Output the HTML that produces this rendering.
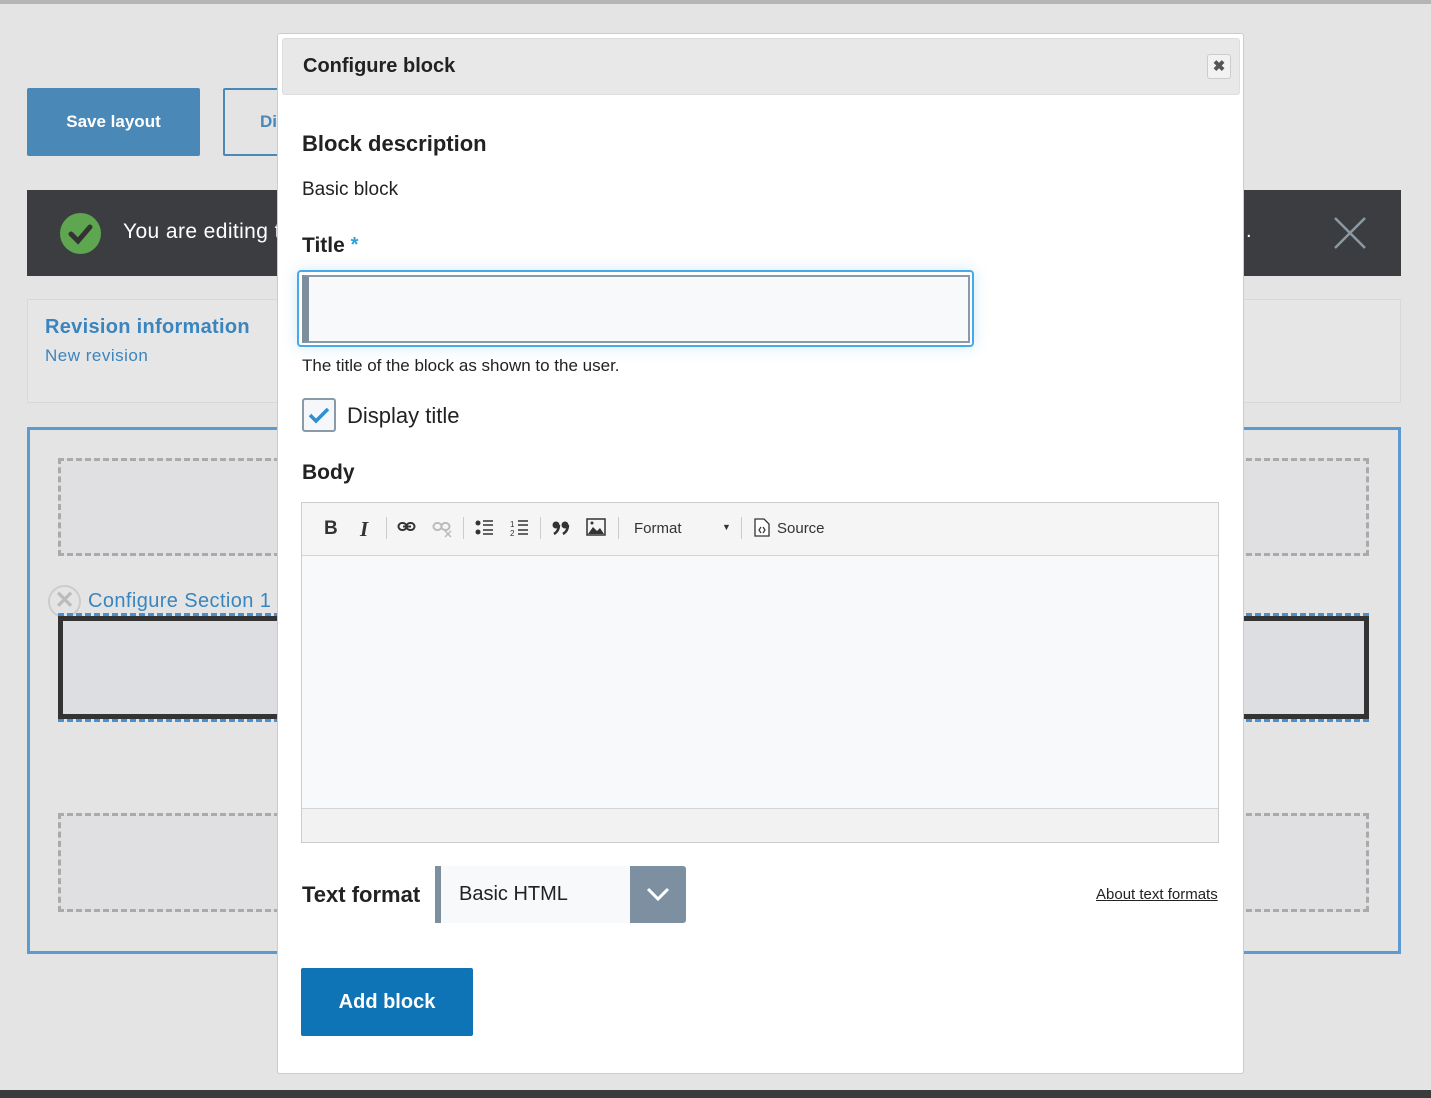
<!DOCTYPE html>
<html><head><meta charset="utf-8"><style>
*{box-sizing:border-box;margin:0;padding:0}
body{width:1431px;height:1098px;background:#e4e4e4;position:relative;overflow:hidden;font-family:"Liberation Sans",Arial,sans-serif;color:#222}
.a{position:absolute}
</style></head><body>
<div class="a" style="left:0;top:0;width:1431px;height:4px;background:#b5b5b5"></div>
<div class="a" style="left:0;top:1090px;width:1431px;height:8px;background:#3a3b3d"></div>

<div class="a" style="left:27px;top:88px;width:173px;height:68px;background:#4a88b7;border-radius:2px;color:#fff;font-weight:bold;font-size:17px;line-height:68px;text-align:center">Save layout</div>
<div class="a" style="left:223px;top:88px;width:80px;height:68px;border:2px solid #4a88b7;border-radius:2px;color:#4a88b7;font-weight:bold;font-size:17px;line-height:64px;padding-left:35px">Di</div>
<div class="a" style="left:27px;top:190px;width:1374px;height:86px;background:#3b3d40"></div>
<div class="a" style="left:60px;top:213px;width:41px;height:41px;border-radius:50%;background:#5ea64f"></div>
<svg class="a" style="left:60px;top:213px" width="41" height="41"><path d="M11 21 L18 28 L30 14" stroke="#333" stroke-width="5" fill="none" stroke-linecap="round"/></svg>
<div class="a" style="left:123px;top:220px;color:#fff;font-size:21px;letter-spacing:0.4px">You are editing t</div>
<div class="a" style="left:1246px;top:220px;color:#fff;font-size:20px">.</div>
<svg class="a" style="left:1333px;top:216px" width="34" height="34"><path d="M2 2 L32 32 M32 2 L2 32" stroke="#8c99a5" stroke-width="2.5"/></svg>
<div class="a" style="left:27px;top:299px;width:1374px;height:104px;background:#e6e6e6;border:1px solid #d8d8d8"></div>
<div class="a" style="left:45px;top:316px;color:#3a85be;font-weight:bold;font-size:20px;letter-spacing:0.3px">Revision information</div>
<div class="a" style="left:45px;top:346px;color:#3a85be;font-size:17px;letter-spacing:0.5px">New revision</div>
<div class="a" style="left:27px;top:427px;width:1374px;height:527px;border:3px solid #5b9bd1"></div>
<div class="a" style="left:58px;top:458px;width:1311px;height:98px;border:3px dashed #aaa;background:#e0e0e2"></div>
<div class="a" style="left:48px;top:585px;width:33px;height:33px;border-radius:50%;border:2px solid #ccc;color:#bbb;font-size:24px;line-height:28px;text-align:center;font-weight:bold">✕</div>
<div class="a" style="left:88px;top:590px;color:#3a85be;font-size:20px;letter-spacing:0.4px">Configure Section 1</div>
<div class="a" style="left:58px;top:613px;width:1311px;height:109px;border-top:3px dashed #4a90d0;border-bottom:3px dashed #4a90d0"></div>
<div class="a" style="left:58px;top:616px;width:1311px;height:103px;border:5px solid #333;background:#dcdee2"></div>
<div class="a" style="left:58px;top:813px;width:1311px;height:99px;border:3px dashed #aaa;background:#e0e0e2"></div>

<div class="a" style="left:277px;top:33px;width:967px;height:1041px;background:#fff;border:1px solid #ccc;border-radius:3px"></div>
<div class="a" style="left:282px;top:38px;width:958px;height:57px;background:#e8e8e8;border:1px solid #ddd;border-radius:3px"></div>
<div class="a" style="left:303px;top:55px;font-weight:bold;font-size:20px;color:#222">Configure block</div>
<div class="a" style="left:1207px;top:54px;width:24px;height:25px;border:1px solid #ccc;border-radius:3px;background:#f2f2f2;text-align:center;line-height:23px;font-size:15px;color:#555;font-weight:bold">✖</div>
<div class="a" style="left:302px;top:131px;font-weight:bold;font-size:22px">Block description</div>
<div class="a" style="left:302px;top:179px;font-size:19px">Basic block</div>
<div class="a" style="left:302px;top:234px;font-weight:bold;font-size:21px">Title <span style="color:#2f9fd8;font-size:20px;vertical-align:top">*</span></div>
<div class="a" style="left:297px;top:270px;width:677px;height:77px;border:2px solid #45aae6;border-radius:4px;box-shadow:0 0 14px rgba(69,170,230,.25)"></div>
<div class="a" style="left:302px;top:275px;width:668px;height:68px;border:2px solid #8a9aa8;border-left:7px solid #7d8e9d;background:#f8f9fb"></div>
<div class="a" style="left:302px;top:356px;font-size:17px">The title of the block as shown to the user.</div>
<div class="a" style="left:302px;top:398px;width:34px;height:34px;border:2px solid #8a9aa8;border-radius:3px;background:#f5f7fa"></div>
<svg class="a" style="left:302px;top:398px" width="34" height="34"><path d="M8 17 L14 23 L26 11" stroke="#2f8fd0" stroke-width="3.5" fill="none"/></svg>
<div class="a" style="left:347px;top:403px;font-size:22px">Display title</div>
<div class="a" style="left:302px;top:461px;font-weight:bold;font-size:21px">Body</div>
<div class="a" style="left:301px;top:502px;width:918px;height:341px;border:1px solid #ccc;background:#f8f9fa"></div>
<div class="a" style="left:302px;top:503px;width:916px;height:53px;background:#f5f5f5;border-bottom:1px solid #d5d5d5"></div>
<div class="a" style="left:302px;top:808px;width:916px;height:34px;background:#f2f2f2;border-top:1px solid #d5d5d5"></div>
<div class="a" style="left:324px;top:518px;font-weight:bold;font-size:19px;color:#333">B</div>
<div class="a" style="left:360px;top:517px;font-style:italic;font-family:'Liberation Serif',serif;font-weight:bold;font-size:21px;color:#333">I</div>
<div class="a" style="left:386px;top:517px;width:1px;height:22px;background:#ccc"></div>
<svg class="a" style="left:397px;top:520px" width="20" height="14"><rect x="1.5" y="3" width="8" height="7" rx="3.5" fill="none" stroke="#333" stroke-width="2"/><rect x="9.5" y="3" width="8" height="7" rx="3.5" fill="none" stroke="#333" stroke-width="2"/><path d="M6 6.5h8" stroke="#333" stroke-width="2"/></svg>
<svg class="a" style="left:432px;top:520px" width="22" height="18"><rect x="1.5" y="3" width="8" height="7" rx="3.5" fill="none" stroke="#bbb" stroke-width="2"/><rect x="9.5" y="3" width="8" height="7" rx="3.5" fill="none" stroke="#bbb" stroke-width="2"/><path d="M13 11l6 6M19 11l-6 6" stroke="#bbb" stroke-width="1.5"/></svg>
<div class="a" style="left:463px;top:517px;width:1px;height:22px;background:#ccc"></div>
<svg class="a" style="left:474px;top:518px" width="22" height="20"><circle cx="4" cy="5" r="2.5" fill="#333"/><circle cx="4" cy="14" r="2.5" fill="#333"/><path d="M9 3h10M9 7h10M9 12h10M9 16h10" stroke="#333" stroke-width="1.5"/></svg>
<svg class="a" style="left:509px;top:518px" width="22" height="20"><text x="1" y="9" font-size="8" fill="#333" font-family="Liberation Sans">1</text><text x="1" y="18" font-size="8" fill="#333" font-family="Liberation Sans">2</text><path d="M9 3h10M9 7h10M9 12h10M9 16h10" stroke="#333" stroke-width="1.5"/></svg>
<div class="a" style="left:540px;top:517px;width:1px;height:22px;background:#ccc"></div>
<svg class="a" style="left:551px;top:520px" width="20" height="16"><circle cx="5" cy="5" r="3.5" fill="#333"/><path d="M8 5 Q8 11 3 14" stroke="#333" stroke-width="2.5" fill="none"/><circle cx="14" cy="5" r="3.5" fill="#333"/><path d="M17 5 Q17 11 12 14" stroke="#333" stroke-width="2.5" fill="none"/></svg>
<svg class="a" style="left:586px;top:518px" width="20" height="18"><rect x="1" y="1" width="18" height="16" fill="none" stroke="#333" stroke-width="1.5"/><path d="M2 16 L7 9 L11 13 L14 10 L18 16Z" fill="#333"/><circle cx="6" cy="5" r="1.5" fill="#333"/></svg>
<div class="a" style="left:618px;top:517px;width:1px;height:22px;background:#ccc"></div>
<div class="a" style="left:634px;top:520px;font-size:15px;color:#333">Format</div>
<div class="a" style="left:722px;top:522px;font-size:9px;color:#333">▼</div>
<div class="a" style="left:741px;top:517px;width:1px;height:22px;background:#ccc"></div>
<svg class="a" style="left:754px;top:518px" width="16" height="19"><path d="M1 1h9l5 5v12H1z" fill="#fff" stroke="#333" stroke-width="1.3"/><path d="M7 9l-2 3 2 3M9 9l2 3-2 3" stroke="#333" stroke-width="1.2" fill="none"/></svg>
<div class="a" style="left:777px;top:520px;font-size:15px;color:#333">Source</div>
<div class="a" style="left:302px;top:882px;font-weight:bold;font-size:22px">Text format</div>
<div class="a" style="left:435px;top:866px;width:251px;height:57px;background:#f8f9fb;border-left:6px solid #7d8e9d"></div>
<div class="a" style="left:459px;top:883px;font-size:20px">Basic HTML</div>
<div class="a" style="left:630px;top:866px;width:56px;height:57px;background:#7d90a2;border-radius:0 3px 3px 0"></div>
<svg class="a" style="left:645px;top:884px" width="26" height="20"><path d="M3 5 L13 15 L23 5" stroke="#fff" stroke-width="3" fill="none"/></svg>
<div class="a" style="left:1096px;top:886px;font-size:15px;text-decoration:underline">About text formats</div>
<div class="a" style="left:301px;top:968px;width:172px;height:68px;background:#0f74b5;border-radius:2px;color:#fff;font-weight:bold;font-size:20px;line-height:68px;text-align:center">Add block</div>
</body></html>
